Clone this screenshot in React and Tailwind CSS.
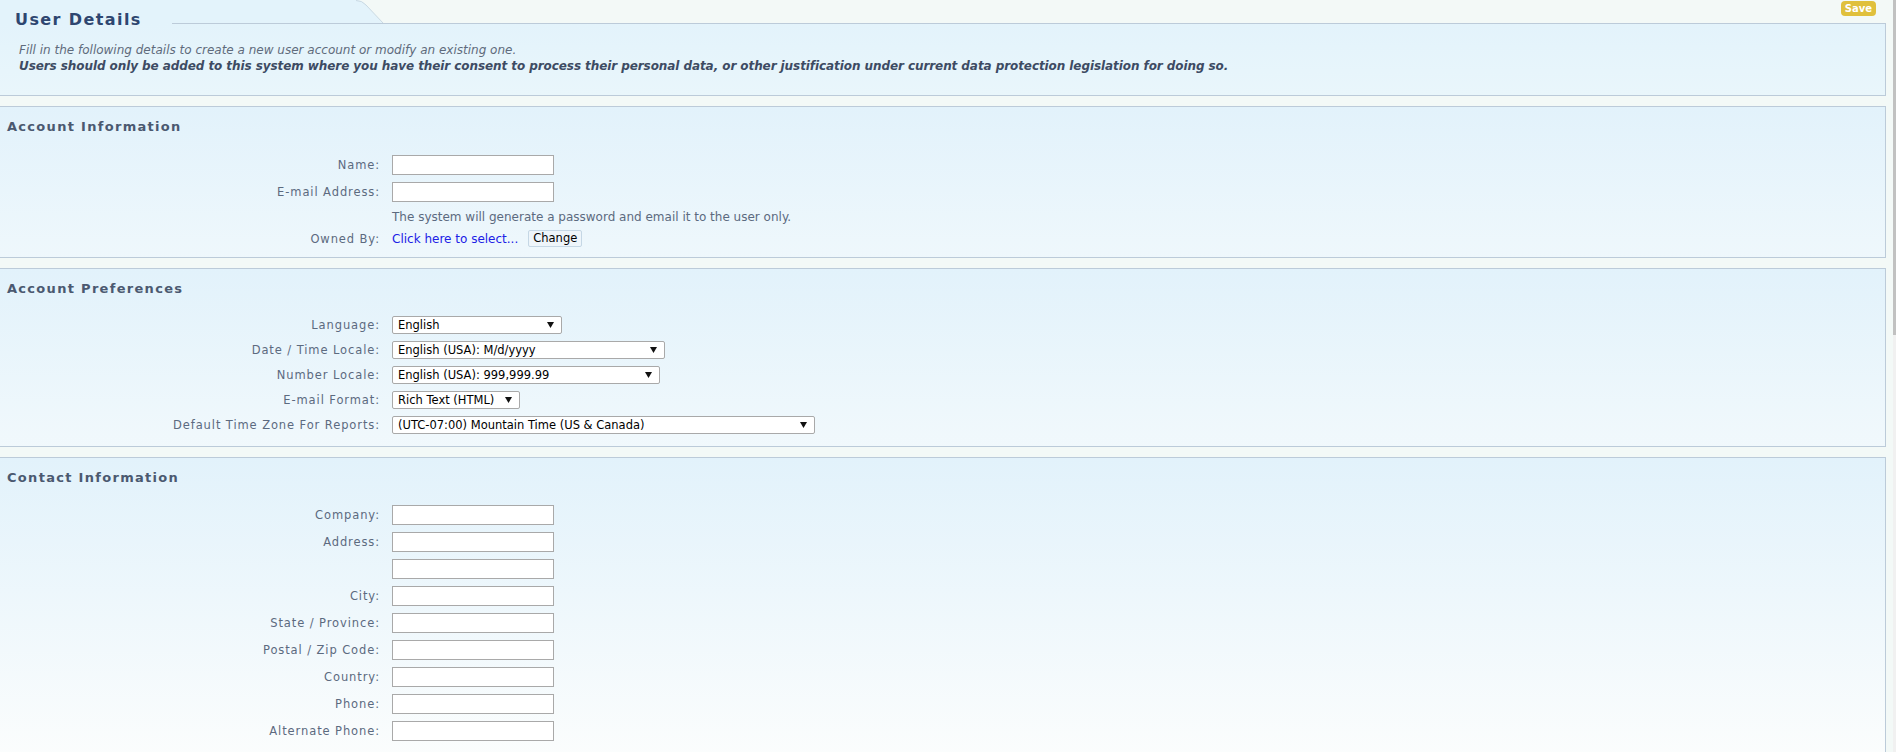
import React from 'react';

const FONT = "font-['DejaVu_Sans',Verdana,sans-serif]";

const preferences = [
  { label: 'Language:', value: 'English', width: 'w-[170px]' },
  { label: 'Date / Time Locale:', value: 'English (USA): M/d/yyyy', width: 'w-[273px]' },
  { label: 'Number Locale:', value: 'English (USA): 999,999.99', width: 'w-[268px]' },
  { label: 'E-mail Format:', value: 'Rich Text (HTML)', width: 'w-[128px]' },
  { label: 'Default Time Zone For Reports:', value: '(UTC-07:00) Mountain Time (US & Canada)', width: 'w-[423px]' },
];

const contactFields = [
  'Company:',
  'Address:',
  '',
  'City:',
  'State / Province:',
  'Postal / Zip Code:',
  'Country:',
  'Phone:',
  'Alternate Phone:',
];

function Label({ children }) {
  return (
    <div className="w-[392px] shrink-0 whitespace-nowrap pr-[12px] text-right text-[11.5px] leading-[14px] tracking-[0.9px] text-[#5c6a7f]">
      {children}
    </div>
  );
}

function TextBox() {
  return (
    <input
      type="text"
      className="h-[20px] w-[162px] border border-[#a9a9a9] bg-white px-1 text-[12px] outline-none"
    />
  );
}

function Dropdown({ value, width }) {
  return (
    <div
      className={`flex h-[18px] items-center justify-between rounded-[2px] border border-[#a9a9a9] bg-white pl-[5px] pr-[7px] ${width}`}
    >
      <span className="whitespace-nowrap text-[11.5px] leading-[16px] text-black">{value}</span>
      <svg width="7" height="6" viewBox="0 0 7 6" className="shrink-0">
        <polygon points="0,0 7,0 3.5,6" fill="#111" />
      </svg>
    </div>
  );
}

function Panel({ title, children, className = '' }) {
  return (
    <section
      className={`mt-[10px] border-y border-r border-[#bccbd9] bg-[linear-gradient(to_bottom,#e2f2fb,#fbfdfd_300px)] pt-[12px] ${className}`}
    >
      <h2 className="pl-[7px] text-[13px] font-bold leading-[16px] tracking-[1.3px] text-[#4b5970]">{title}</h2>
      {children}
    </section>
  );
}

export default function App() {
  return (
    <div className={`flex h-[752px] overflow-hidden bg-[#f3f9f7] ${FONT}`}>
      <main className="min-w-0 flex-1 pr-[7px]">
        {/* title tab */}
        <div className="flex h-[24px]">
          <div className="relative z-10 h-[24px] w-[172px] shrink-0 bg-[#e3f3fb] pl-[15px] pt-[11px]">
            <h1 className="whitespace-nowrap text-[16px] font-bold leading-[18px] tracking-[1.4px] text-[#2e4670]">
              User Details
            </h1>
          </div>
          <svg width="213" height="24" viewBox="0 0 213 24" className="shrink-0">
            <path d="M0 0H184Q190 0 194 5L211 23.5H0Z" fill="#e3f3fb" />
            <path d="M184 0.5Q190 0.5 194 5L211 23" fill="none" stroke="#c9d9e3" />
            <line x1="0" y1="23.5" x2="213" y2="23.5" stroke="#bccbd9" />
          </svg>
          <div className="flex flex-1 items-start justify-end border-b border-[#bccbd9] pr-[10px] pt-[1px]">
            <button className="h-[15px] rounded-[4px] bg-[#e0c03c] px-[4px] text-[10px] font-bold leading-[15px] text-white">
              Save
            </button>
          </div>
        </div>

        {/* intro */}
        <section className="border-b border-r border-[#bccbd9] bg-[linear-gradient(to_bottom,#e3f3fb,#e9f6fb)] pb-[21px] pl-[19px] pt-[18px] text-[12px] leading-[16px]">
          <p className="italic text-[#5f6b7c]">
            Fill in the following details to create a new user account or modify an existing one.
          </p>
          <p className="font-bold italic tracking-[-0.08px] text-[#3d4b63]">
            Users should only be added to this system where you have their consent to process their personal data, or
            other justification under current data protection legislation for doing so.
          </p>
        </section>

        {/* account information */}
        <Panel title="Account Information" className="pb-[9px]">
          <div className="mt-[20px] flex h-[20px] items-center">
            <Label>Name:</Label>
            <TextBox />
          </div>
          <div className="mt-[7px] flex h-[20px] items-center">
            <Label>E-mail Address:</Label>
            <TextBox />
          </div>
          <div className="mt-[8px] flex h-[14px] items-center">
            <Label />
            <span className="text-[12px] leading-[14px] text-[#5c6a7f]">
              The system will generate a password and email it to the user only.
            </span>
          </div>
          <div className="mt-[5px] flex h-[19px] items-center">
            <Label>Owned By:</Label>
            <a href="#" className="text-[12px] leading-[16px] text-[#2020e6]">
              Click here to select...
            </a>
            <button className="ml-[10px] h-[17px] rounded-[2px] border border-[#c5d7e5] bg-[#eef5fa] px-[4px] text-[11.5px] leading-[15px] text-black">
              Change
            </button>
          </div>
        </Panel>

        {/* account preferences */}
        <Panel title="Account Preferences" className="pb-[11px]">
          <div className="mt-[18px] flex flex-col gap-[5px]">
            {preferences.map((p) => (
              <div key={p.label} className="flex h-[20px] items-center">
                <Label>{p.label}</Label>
                <Dropdown value={p.value} width={p.width} />
              </div>
            ))}
          </div>
        </Panel>

        {/* contact information */}
        <Panel title="Contact Information" className="pb-[20px]">
          <div className="mt-[19px] flex flex-col gap-[7px]">
            {contactFields.map((label, i) => (
              <div key={i} className="flex h-[20px] items-center">
                <Label>{label}</Label>
                <TextBox />
              </div>
            ))}
          </div>
        </Panel>
      </main>

      {/* page scrollbar */}
      <div className="flex w-[3px] shrink-0 flex-col bg-[#f1f1f1]">
        <div className="h-[335px] bg-[#c1c1c1]" />
      </div>
    </div>
  );
}
